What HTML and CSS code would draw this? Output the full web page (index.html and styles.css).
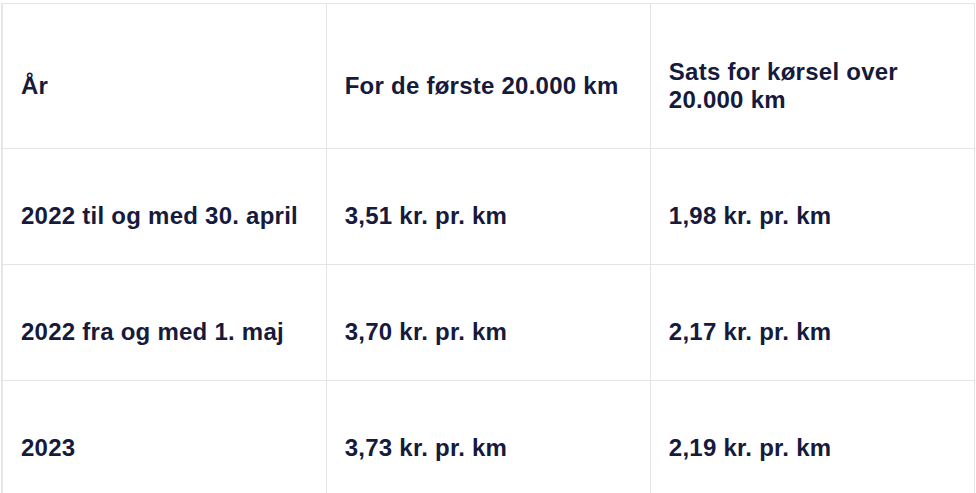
FILE: index.html
```html
<!DOCTYPE html>
<html lang="da">
<head>
<meta charset="utf-8">
<title>Satser</title>
<link rel="stylesheet" href="styles.css">
</head>
<body>
<table class="rates">
  <thead>
    <tr>
      <th class="cell">År</th>
      <th class="cell">For de første 20.000 km</th>
      <th class="cell">Sats for kørsel over 20.000 km</th>
    </tr>
  </thead>
  <tbody>
    <tr>
      <td class="cell">2022 til og med 30. april</td>
      <td class="cell">3,51 kr. pr. km</td>
      <td class="cell">1,98 kr. pr. km</td>
    </tr>
    <tr>
      <td class="cell">2022 fra og med 1. maj</td>
      <td class="cell">3,70 kr. pr. km</td>
      <td class="cell">2,17 kr. pr. km</td>
    </tr>
    <tr>
      <td class="cell">2023</td>
      <td class="cell">3,73 kr. pr. km</td>
      <td class="cell">2,19 kr. pr. km</td>
    </tr>
  </tbody>
</table>
</body>
</html>
```
FILE: styles.css
```css
html, body {
  margin: 0;
  padding: 0;
  background: #ffffff;
}
body {
  padding: 3px 0 0 1px;
  font-family: "Liberation Sans", Arial, sans-serif;
  color: #161a3c;
}
.rates {
  width: 974px;
  border-collapse: collapse;
  table-layout: fixed;
  border-left: 2px solid #e6e6e6;
}
.cell {
  border: 1px solid #e4e4e4;
  padding: 53px 19px 34px 18px;
  font-size: 24px;
  font-weight: 700;
  letter-spacing: 0.25px;
  line-height: normal;
  text-align: left;
  vertical-align: middle;
}
.rates thead .cell {
  height: 56px;
  padding-top: 54px;
}
.rates tbody .cell {
  height: 28px;
}
.rates .cell:first-child {
  border-left: 2px solid #e6e6e6;
}
```
